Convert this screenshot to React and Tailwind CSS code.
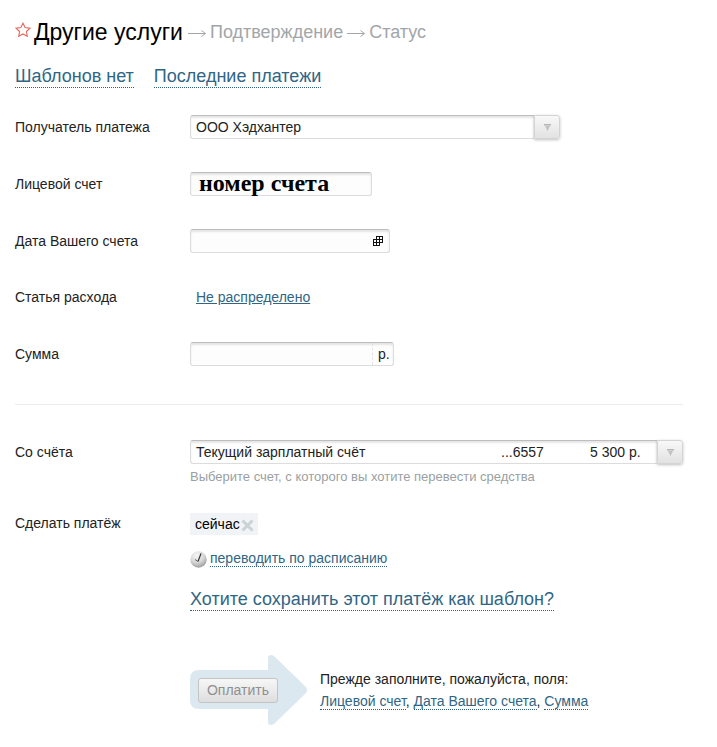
import React from "react";

const linkCls = "text-[#2f6685] border-b border-dotted border-[#2a6482]";
const fieldCls =
  "h-[24px] rounded-[3px] border border-[#dcdcdc] border-t-[#bdbdbd] shadow-[inset_0_2px_2px_rgba(0,0,0,0.1)] bg-[#fdfdfd]";

function Row({ label, children, className }) {
  return (
    <div className={"flex items-center h-[24px] " + className}>
      <div className="w-[175px] shrink-0 text-[14px] text-[#222]">{label}</div>
      {children}
    </div>
  );
}

function SelectButton() {
  return (
    <div className="w-[26px] h-[24px] shrink-0 flex items-center justify-center rounded-r-[3px] border border-[#d4d4d4] bg-gradient-to-b from-[#f8f8f8] to-[#e2e2e2] shadow-[0_1px_3px_rgba(0,0,0,0.25)]">
      <svg width="9" height="9" viewBox="0 0 9 9">
        <path d="M1 1h7v1.500H1z" fill="#b5b5b5" />
        <path d="M2 3h5L4.500 8z" fill="#c2c2c2" />
      </svg>
    </div>
  );
}

function CalendarIcon() {
  return (
    <svg width="10" height="10" viewBox="0 0 10 10" fill="none" stroke="#111" strokeWidth="1" shapeRendering="crispEdges">
      <path d="M3.500.5h6v6h-3v3h-6v-6h3zM.5 3.500h9M.5 6.500h9M3.500.5v9M6.500.5v9" />
    </svg>
  );
}

function ClockIcon() {
  return (
    <svg width="17" height="17" viewBox="0 0 17 17" className="shrink-0">
      <defs>
        <radialGradient id="clk" cx="0.4" cy="0.25" r="0.85">
          <stop offset="0" stopColor="#f6f6f6" />
          <stop offset="0.5" stopColor="#d8d8d8" />
          <stop offset="1" stopColor="#8f8f8f" />
        </radialGradient>
      </defs>
      <circle cx="8.500" cy="8.500" r="8.200" fill="url(#clk)" />
      <path d="M8 10.500L11 2.500" stroke="#333" strokeWidth="1.200" />
      <path d="M8 10.500L5 8.500" stroke="#666" strokeWidth="1" />
    </svg>
  );
}

function StepArrow({ className }) {
  return (
    <svg width="18" height="9" viewBox="0 0 18 9" className={"shrink-0 mt-[2px] " + className}>
      <path d="M0 4.500h17M13.500 1.500L17.500 4.500L13.500 7.500" fill="none" stroke="#a2a6a8" strokeWidth="1" />
    </svg>
  );
}

function PayArrow() {
  return (
    <svg width="118" height="70" viewBox="0 0 118 70" className="absolute left-0 top-0">
      <path
        d="M9 15H78V3Q78 0 81 0Q84 0 86 3L116 32Q118 35 116 38L86 67Q84 70 81 70Q78 70 78 67V54H9Q0 54 0 45V24Q0 15 9 15Z"
        fill="#dce8ef"
      />
    </svg>
  );
}

export default function App() {
  return (
    <div className="w-[717px] h-[747px] bg-white pl-[15px] pt-[20px] overflow-hidden font-['Liberation_Sans',Arial,sans-serif] text-[14px] text-[#222]">
      <div className="flex items-center h-[24px]">
        <svg width="16" height="15" viewBox="0 0 16 15" className="mb-[5px] mr-[3px] shrink-0">
          <path
            d="M8 1.200l2.100 4.400 4.800.6-3.500 3.300.9 4.800L8 11.900l-4.300 2.400.9-4.800L1.100 6.200l4.800-.6z"
            fill="none"
            stroke="#e4685d"
            strokeWidth="1.100"
          />
        </svg>
        <span className="text-[23px] text-black">Другие услуги</span>
        <span className="flex items-center text-[18px] text-[#a2a6a8] ml-[5px]">
          <StepArrow className="mr-[4px]" />
          Подтверждение
          <StepArrow className="ml-[4px] mr-[4px]" />
          Статус
        </span>
      </div>

      <div className="flex gap-[20px] mt-[22px] text-[18px] leading-[21px]">
        <span className={linkCls}>Шаблонов нет</span>
        <span className={linkCls}>Последние платежи</span>
      </div>

      <Row label="Получатель платежа" className="mt-[27px]">
        <div className={fieldCls + " w-[344px] rounded-r-none border-r-0 pl-[5px] leading-[22px] text-[#222] bg-white"}>ООО Хэдхантер</div>
        <SelectButton />
      </Row>

      <Row label="Лицевой счет" className="mt-[33px]">
        <div className={fieldCls + " w-[182px] pl-[8px] leading-[21px] font-['Liberation_Serif',serif] font-bold text-[24px] text-black"}>номер счета</div>
      </Row>

      <Row label="Дата Вашего счета" className="mt-[33px]">
        <div className={fieldCls + " w-[200px] flex items-center justify-end pr-[6px]"}>
          <CalendarIcon />
        </div>
      </Row>

      <Row label="Статья расхода" className="mt-[32px]">
        <span className="ml-[6px] text-[#2f6685] underline">Не распределено</span>
      </Row>

      <Row label="Сумма" className="mt-[33px]">
        <div className={fieldCls + " w-[204px] flex justify-end"}>
          <div className="w-[21px] border-l border-dashed border-[#e2e2e2] pl-[5px] leading-[22px]">р.</div>
        </div>
      </Row>

      <div className="w-[668px] h-px bg-[#e8eced] mt-[38px]" />

      <Row label="Со счёта" className="mt-[35px]">
        <div className={fieldCls + " w-[467px] rounded-r-none border-r-0 bg-white flex pl-[5px] leading-[22px]"}>
          <span className="w-[305px]">Текущий зарплатный счёт</span>
          <span className="w-[89px]">...6557</span>
          <span>5 300 р.</span>
        </div>
        <SelectButton />
      </Row>

      <div className="ml-[175px] mt-[5px] text-[13px] leading-[16px] text-[#9a9fa2]">Выберите счет, с которого вы хотите перевести средства</div>

      <div className="flex mt-[28px]">
        <div className="w-[175px] shrink-0 leading-[20px]">Сделать платёж</div>
        <div className="flex flex-col items-start">
          <div className="flex items-center w-[68px] h-[22px] bg-[#f0f4f6] pl-[5px] text-black">
            сейчас
            <svg width="13" height="13" viewBox="0 0 13 13" className="ml-[1px] mt-[2px]">
              <path d="M1.500 1.500l10 10M11.500 1.500l-10 10" stroke="#cbd3d7" strokeWidth="3" />
            </svg>
          </div>
          <div className="flex items-center mt-[15px]">
            <ClockIcon />
            <span className={linkCls + " ml-[3px] leading-[16px] mb-[2px]"}>переводить по расписанию</span>
          </div>
          <span className={linkCls + " mt-[20px] text-[18px] leading-[21px]"}>Хотите сохранить этот платёж как шаблон?</span>
        </div>
      </div>

      <div className="flex ml-[175px] mt-[44px]">
        <div className="relative w-[118px] h-[70px] shrink-0 flex items-center">
          <PayArrow />
          <div className="relative ml-[8px] w-[80px] h-[25px] flex items-center justify-center rounded-[3px] border border-[#c4c4c4] bg-gradient-to-b from-[#f7f7f7] to-[#dedede] text-[#8f8f8f]">
            Оплатить
          </div>
        </div>
        <div className="ml-[12px] mt-[13px] leading-[22px] text-[14px] text-[#222]">
          <div>Прежде заполните, пожалуйста, поля:</div>
          <div>
            <span className={linkCls}>Лицевой счет</span>, <span className={linkCls}>Дата Вашего счета</span>, <span className={linkCls}>Сумма</span>
          </div>
        </div>
      </div>
    </div>
  );
}
